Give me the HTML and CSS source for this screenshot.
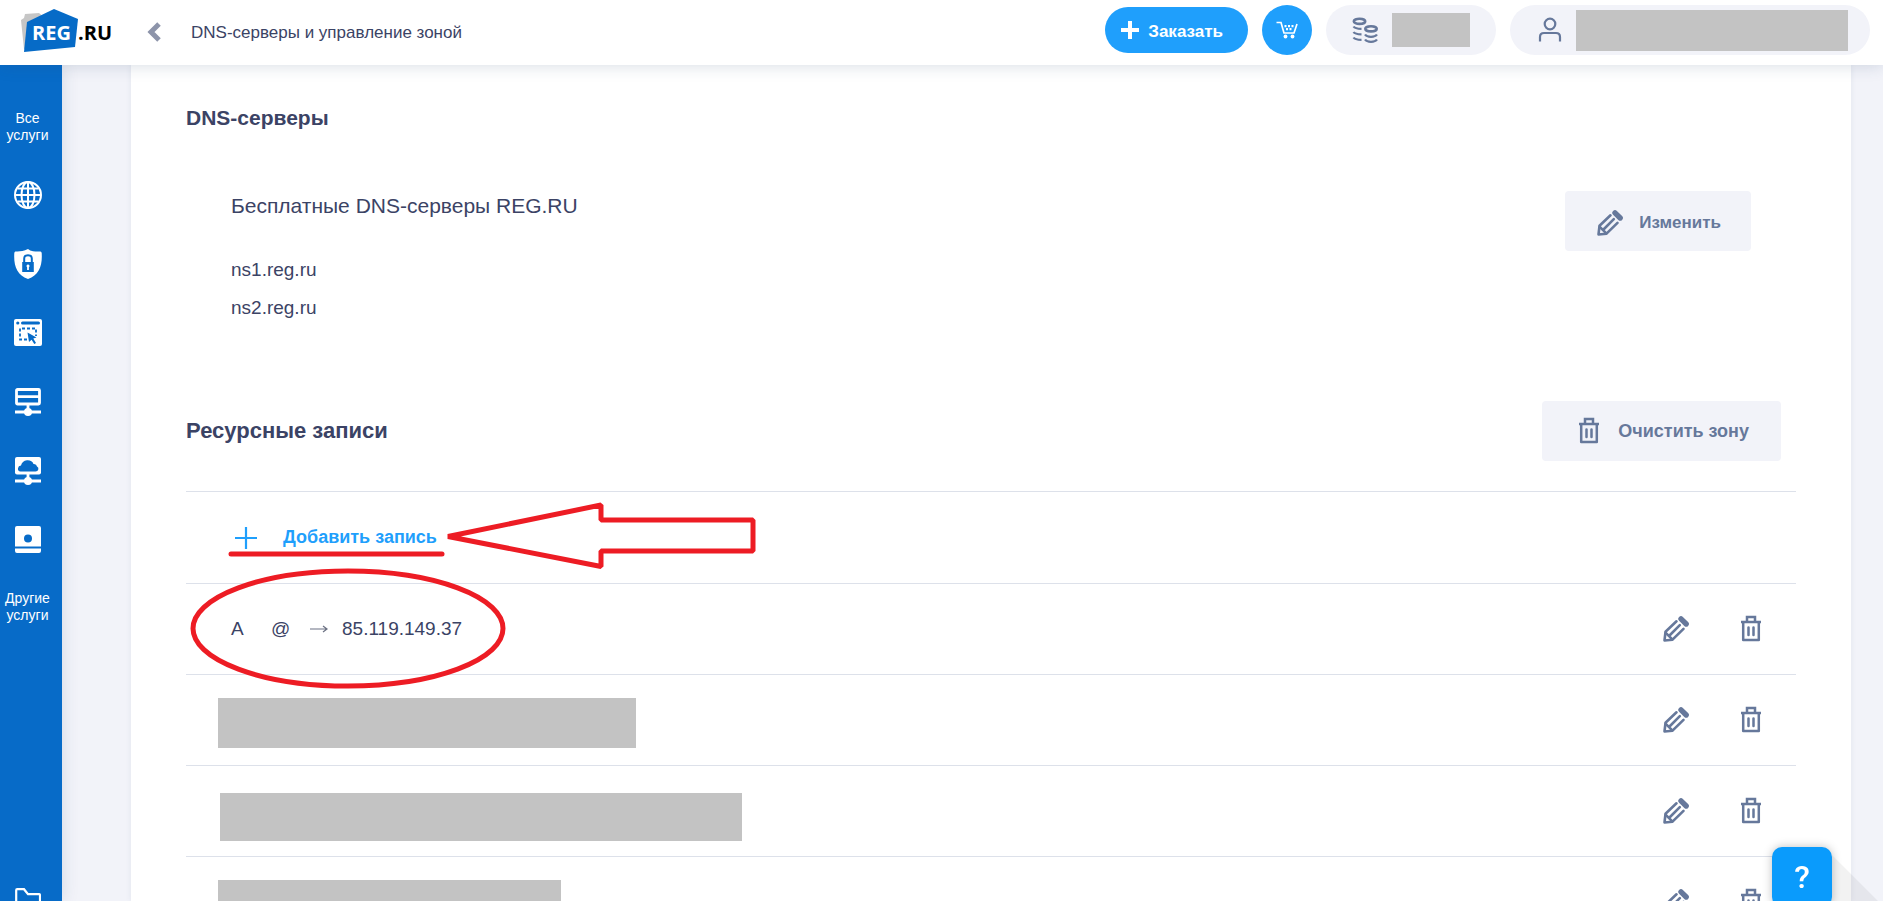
FILE: index.html
```html
<!DOCTYPE html>
<html lang="ru">

<head>
  <meta charset="UTF-8">
  <title>DNS-серверы и управление зоной</title>
  <meta name="viewport" content="width=device-width, initial-scale=1.0">
  <link rel="stylesheet" href="styles.css">
</head>

<body>
  <!-- shared icons -->
  <svg class="sprite" aria-hidden="true">
    <symbol id="i-pencil" viewBox="0 0 30 30">
      <g fill="none" stroke="currentColor" stroke-width="2.600" stroke-linecap="round" stroke-linejoin="round">
        <path d="M15.500 7.300 4.500 17.800 3.500 26.500 11.500 25.700 22.500 14.800"/>
        <path d="M18.800 11.200 8.500 21.500M4.800 18.800l6.500 6.500"/>
      </g>
      <path stroke="currentColor" stroke-width="5.400" stroke-linecap="round" d="M20 4.800 25.200 10"/>
    </symbol>
    <symbol id="i-trash" viewBox="0 0 30 30">
      <g fill="none" stroke="currentColor" stroke-width="2.500">
        <path d="M5 8h20M11 7.500V3h8v4.500" />
        <path stroke-linejoin="round" d="M7.200 8v18h15.600V8" />
        <path stroke-linecap="round" d="M12.500 13.500V21M17.500 13.500V21"/>
      </g>
    </symbol>
  </svg>

  <header class="header">
    <a class="logo" href="#" aria-label="REG.RU">
      <svg width="96" height="48" viewBox="0 0 96 48">
        <path fill="#c6c6c6" d="M0 14 3 12 4 8 18 7 24 12 14 41 3 43z"/>
        <path fill="#066bc7" d="M6 16 33 3 57 13 54 41 3 46z"/>
        <text class="logo-text" x="11" y="34" fill="#fff">REG</text>
        <text class="logo-text" x="57" y="34" fill="#000">.RU</text>
      </svg>
    </a>
    <a class="back" href="#" aria-label="Назад">
      <svg width="16" height="22" viewBox="0 0 16 22">
        <path d="M12 3 4 11 12 19" fill="none" stroke="#8d94aa" stroke-width="5"/>
      </svg>
    </a>
    <h1 class="header-title">DNS-серверы и управление зоной</h1>
    <div class="header-actions">
      <button class="order" type="button">
        <svg width="18" height="18" viewBox="0 0 18 18"><path d="M9 0v18M0 9h18" stroke="#fff" stroke-width="4"/></svg>
        <span>Заказать</span>
      </button>
      <button class="cart" type="button" aria-label="Корзина">
        <svg width="22" height="18" viewBox="0 0 22 18">
          <path d="M.5 1.500h4.500l3 10.500h10L21 3" fill="none" stroke="#fff" stroke-width="1.700"/>
          <path d="M8.500 5.200h10M10 8.200h7" stroke="#fff" stroke-width="2.200" stroke-dasharray="2 1.500"/>
          <circle cx="9.500" cy="15.500" r="1.900" fill="#fff"/><circle cx="16.500" cy="15.500" r="1.900" fill="#fff"/>
        </svg>
      </button>
      <a class="pill" href="#" aria-label="Баланс">
        <svg width="26" height="26" viewBox="0 0 26 26" fill="none" stroke="#66789b" stroke-width="2.600">
          <ellipse cx="7.500" cy="4.300" rx="5.700" ry="2.600"/>
          <ellipse cx="19" cy="11.800" rx="5.700" ry="2.600"/>
          <path stroke-width="2.200" d="M1.500 9.500q1.500 2.300 8 2.300M1.500 15q1.500 2.300 8 2.300M1.500 20.500q1.500 2.300 8 2.300M13 17.500q1.500 2.300 6 2.300t6-2.300M13 22.500q1.500 2.300 6 2.300t6-2.300"/>
        </svg>
        <span class="mask mask-balance"></span>
      </a>
      <a class="pill pill-user" href="#" aria-label="Профиль">
        <svg width="26" height="26" viewBox="0 0 26 26" fill="none" stroke="#66789b" stroke-width="2.200">
          <circle cx="14" cy="7" r="5.300"/>
          <path d="M4 24.500V20q0-4 4-4h12q4 0 4 4v4.500"/>
        </svg>
        <span class="mask mask-user"></span>
      </a>
    </div>
  </header>

  <div class="page">
    <nav class="sidebar">
      <a class="side-label" href="#">Все<br>услуги</a>
      <div class="side-icons">
        <a href="#" aria-label="Домены">
          <svg width="28" height="28" viewBox="0 0 28 28" fill="none" stroke="#fff" stroke-width="2">
            <circle cx="14" cy="14" r="13"/>
            <ellipse cx="14" cy="14" rx="6.500" ry="13"/>
            <path d="M14 1v26M1 14h26M3.500 7.500h21M3.500 20.500h21"/>
          </svg>
        </a>
        <a href="#" aria-label="SSL-сертификаты">
          <svg width="28" height="30" viewBox="0 0 28 30">
            <path fill="#fff" d="M14 0q2 1.800 5 2.200 4 .6 7.500.2 1 .3 1.200 1.600C28.500 17 25 26 14 30 3 26-.5 17 .3 4 .5 2.700 1.500 2.400 1.500 2.400 5 2.800 9 2.200 14 0z"/>
            <path fill="none" stroke="#076bc8" stroke-width="2" d="M10.200 14V9.500q0-3.300 3.800-3.300t3.800 3.300V14"/>
            <path fill="#076bc8" d="M8.200 13h11.600v10H8.200z"/>
            <path fill="#fff" d="M14 15.500a1.500 1.500 0 0 1 .9 2.700V21h-1.800v-2.800a1.500 1.500 0 0 1 .9-2.700z"/>
          </svg>
        </a>
        <a href="#" aria-label="Сайты">
          <svg width="28" height="27" viewBox="0 0 28 27">
            <rect width="28" height="27" rx="2" fill="#fff"/>
            <circle cx="3.800" cy="4" r="1.600" fill="#076bc8"/>
            <path stroke="#076bc8" stroke-width="3" stroke-linecap="round" d="M8.500 4h16"/>
            <path fill="none" stroke="#076bc8" stroke-width="1.800" stroke-dasharray="3 2" d="M13 20.500H6V9.500h16V17"/>
            <path fill="#076bc8" d="M13.500 13.500 22.500 18.500 19.300 19.500 22 24 20.300 25 17.600 20.700 15 23z"/>
          </svg>
        </a>
        <a href="#" aria-label="Хостинг">
          <svg width="26" height="28" viewBox="0 0 26 28" fill="none" stroke="#fff" stroke-width="2.800">
            <rect x="1.500" y="1.500" width="23" height="14.500" rx="1"/>
            <path d="M1.500 8.700h23M13 16v7M0 24h26"/>
            <circle cx="13" cy="24" r="4" fill="#fff" stroke="none"/>
          </svg>
        </a>
        <a href="#" aria-label="Облачные серверы">
          <svg width="26" height="28" viewBox="0 0 26 28">
            <rect width="26" height="17.500" rx="2" fill="#fff"/>
            <path fill="#076bc8" d="M5.500 14.500Q2.500 14 3 11.200q.3-2.300 3-2.700 1-4.500 6-5.200 5-.3 6.500 3.700 3-.3 3.500 2.500 2 1 1.300 3-.5 2-2.800 2z"/>
            <path d="M13 17v7M0 24h26" stroke="#fff" stroke-width="2.800"/>
            <circle cx="13" cy="24" r="4" fill="#fff"/>
          </svg>
        </a>
        <a href="#" aria-label="Выделенные серверы">
          <svg width="26" height="27" viewBox="0 0 26 27">
            <path fill="#fff" d="M2 0h22q2 0 2 2v18H0V2q0-2 2-2zM0 22.500h26V25q0 2-2 2H2q-2 0-2-2z"/>
            <path stroke="#fff" stroke-opacity=".5" d="M0 20.500h26"/>
            <circle cx="13" cy="12.500" r="4" fill="#076bc8"/>
          </svg>
        </a>
      </div>
      <a class="side-label" href="#">Другие<br>услуги</a>
      <a class="side-folder" href="#" aria-label="Документы">
        <svg width="26" height="24" viewBox="0 0 26 24">
          <path fill="none" stroke="#fff" stroke-width="2.200" d="M1.200 21V2.200q0-1 1-1H9l4 5h11q1 0 1 1V21q0 1-1 1H2.200q-1 0-1-1z"/>
        </svg>
      </a>
    </nav>

    <main class="content">
      <section class="servers">
        <h2 class="servers-title">DNS-серверы</h2>
        <div class="servers-body">
          <div>
            <h3 class="servers-name">Бесплатные DNS-серверы REG.RU</h3>
            <ul class="servers-list">
              <li>ns1.reg.ru</li>
              <li>ns2.reg.ru</li>
            </ul>
          </div>
          <button class="btn btn-edit" type="button">
            <svg class="icon"><use href="#i-pencil"/></svg>
            <span>Изменить</span>
          </button>
        </div>
      </section>

      <section class="records">
        <div class="records-head">
          <h2 class="records-title">Ресурсные записи</h2>
          <button class="btn btn-clear" type="button">
            <svg class="icon"><use href="#i-trash"/></svg>
            <span>Очистить зону</span>
          </button>
        </div>
        <div class="records-body">
          <div class="record-add">
            <button class="add" type="button">
              <svg class="icon" viewBox="0 0 30 30"><path d="M15 4v22M4 15h22" stroke="currentColor" stroke-width="2.200"/></svg>
              <span>Добавить запись</span>
            </button>
          </div>
          <ul class="records-list">
            <li class="record">
              <span class="record-type">A</span>
              <span class="record-host">@</span>
              <svg class="record-arrow" viewBox="0 0 18 10"><path d="M0 5h17M13 2 17 5 13 8" fill="none" stroke="#6b7183" stroke-width="1.200"/></svg>
              <span>85.119.149.37</span>
              <div class="record-actions">
                <button type="button" aria-label="Изменить запись"><svg class="icon"><use href="#i-pencil"/></svg></button>
                <button type="button" aria-label="Удалить запись"><svg class="icon"><use href="#i-trash"/></svg></button>
              </div>
            </li>
            <li class="record record-hidden">
              <span class="mask mask-first"></span>
              <div class="record-actions">
                <button type="button" aria-label="Изменить запись"><svg class="icon"><use href="#i-pencil"/></svg></button>
                <button type="button" aria-label="Удалить запись"><svg class="icon"><use href="#i-trash"/></svg></button>
              </div>
            </li>
            <li class="record record-hidden">
              <span class="mask mask-second"></span>
              <div class="record-actions">
                <button type="button" aria-label="Изменить запись"><svg class="icon"><use href="#i-pencil"/></svg></button>
                <button type="button" aria-label="Удалить запись"><svg class="icon"><use href="#i-trash"/></svg></button>
              </div>
            </li>
            <li class="record record-hidden">
              <span class="mask mask-third"></span>
              <div class="record-actions">
                <button type="button" aria-label="Изменить запись"><svg class="icon"><use href="#i-pencil"/></svg></button>
                <button type="button" aria-label="Удалить запись"><svg class="icon"><use href="#i-trash"/></svg></button>
              </div>
            </li>
          </ul>
          <!-- red marks over the list: underline, arrow, ellipse -->
          <svg class="marks" width="580" height="200" viewBox="0 0 580 200" fill="none" stroke="#ed1c24" stroke-width="5">
            <path stroke-linecap="round" d="M45 63h211"/>
            <path d="M262 45.500 415 14V29h152v31H415V75.500z" stroke-linejoin="bevel"/>
            <ellipse cx="162" cy="137.500" rx="155" ry="57.500"/>
          </svg>
        </div>
      </section>
    </main>
  </div>

  <div class="help">
    <svg class="help-shadow" width="60" height="60" viewBox="0 0 60 60"><path d="M0 8 52 60H0z" fill="#000" fill-opacity=".05"/></svg>
    <button class="help-btn" type="button">?</button>
  </div>
</body>

</html>
```
FILE: styles.css
```css
* {
  box-sizing: border-box;
  margin: 0;
  padding: 0;
}

body {
  display: flex;
  flex-direction: column;
  height: 100vh;
  overflow: hidden;
  background: #f2f3f9;
  color: #3b4365;
  font-family: "Liberation Sans", Arial, sans-serif;
  font-size: 18px;
}

a {
  color: inherit;
  text-decoration: none;
}

ul {
  list-style: none;
}

button {
  border: 0;
  background: none;
  color: inherit;
  font: inherit;
  cursor: pointer;
}

svg {
  display: block;
  flex: none;
}

.sprite {
  position: absolute;
  width: 0;
  height: 0;
}

.icon {
  width: 30px;
  height: 30px;
}

.mask {
  flex: none;
  background: #c3c3c3;
}

/* header */
.header {
  position: relative;
  z-index: 2;
  display: flex;
  flex: none;
  align-items: center;
  height: 65px;
  padding: 0 13px 5px 21px;
  background: #fff;
  box-shadow: 0 0 16px rgba(40, 70, 110, .2);
}

.logo-text {
  font-family: "Open Sans", sans-serif;
  font-size: 20px;
  font-weight: 700;
}

.back {
  margin: 4px 28px 0 30px;
}

.header-title {
  margin-top: 6px;
  font-size: 17px;
  font-weight: 400;
}

.header-actions {
  display: flex;
  align-items: center;
  gap: 14px;
  margin-left: auto;
}

.order {
  display: flex;
  align-items: center;
  gap: 9px;
  height: 46px;
  padding: 0 25px 0 16px;
  border-radius: 23px;
  background: #1f9ffc;
  color: #fff;
  font-size: 17px;
  font-weight: 700;
}

.order span {
  padding-top: 4px;
}

.cart {
  display: flex;
  align-items: center;
  justify-content: center;
  width: 50px;
  height: 50px;
  border-radius: 50%;
  background: #1f9ffc;
}

.pill {
  display: flex;
  align-items: center;
  gap: 14px;
  height: 50px;
  padding: 0 26px;
  border-radius: 25px;
  background: #f2f3f9;
}

.pill-user {
  padding-right: 22px;
}

.mask-balance {
  width: 78px;
  height: 34px;
}

.mask-user {
  width: 272px;
  height: 41px;
}

/* sidebar */
.page {
  display: flex;
  flex: 1;
  min-height: 0;
}

.sidebar {
  display: flex;
  flex: none;
  flex-direction: column;
  align-items: center;
  width: 62px;
  padding: 45px 7px 0 0;
  background: #076bc8;
  box-shadow: 0 0 16px rgba(40, 70, 110, .15);
  color: #fff;
}

.side-label {
  font-size: 14px;
  line-height: 17px;
  text-align: center;
}

.side-icons {
  margin: 16px 0;
}

.side-icons a {
  display: flex;
  align-items: center;
  justify-content: center;
  height: 69px;
}

.side-folder {
  margin-top: auto;
  margin-bottom: -11px;
}

/* content */
.content {
  flex: 1;
  margin: 0 32px 0 69px;
  padding: 41px 55px 0;
  overflow: hidden;
  background: #fff;
  box-shadow: 0 0 6px rgba(40, 70, 110, .08);
}

.servers-title {
  font-size: 21px;
  line-height: 24px;
}

.servers-body {
  display: flex;
  align-items: flex-start;
  justify-content: space-between;
  margin-top: 61px;
  padding: 0 45px;
}

.servers-name {
  font-size: 21px;
  font-weight: 400;
  line-height: 30px;
}

.servers-list {
  margin-top: 30px;
  font-size: 19px;
  line-height: 38px;
}

.btn {
  display: flex;
  align-items: center;
  gap: 14px;
  height: 60px;
  padding: 0 30px;
  border-radius: 4px;
  background: #f2f3f9;
  color: #66789b;
  font-weight: 700;
}

.btn-edit {
  padding-top: 4px;
  font-size: 17px;
}

.btn-clear {
  padding: 0 32px;
}

.records {
  margin-top: 74px;
}

.records-head {
  display: flex;
  align-items: center;
  justify-content: space-between;
  padding-right: 15px;
}

.records-title {
  font-size: 22px;
}

.records-body {
  position: relative;
  margin-top: 30px;
}

.record-add {
  display: flex;
  align-items: center;
  height: 92px;
  padding: 0 45px;
  border-top: 1px solid #dde1ea;
}

.add {
  display: flex;
  align-items: center;
  gap: 22px;
  color: #1f9ffc;
  font-weight: 700;
}

.record {
  display: flex;
  align-items: center;
  height: 91px;
  padding: 0 30px 0 45px;
  border-top: 1px solid #dde1ea;
  font-size: 19px;
}

.record-type {
  width: 40px;
}

.record-host {
  width: 39px;
}

.record-arrow {
  width: 18px;
  height: 10px;
  margin-right: 14px;
}

.record-actions {
  display: flex;
  gap: 45px;
  margin-left: auto;
  color: #66789b;
}

.record-hidden {
  padding-left: 32px;
}

.record-hidden .mask {
  align-self: flex-start;
  height: 50px;
  margin-top: 23px;
}

.mask-first {
  width: 418px;
}

.record-hidden .mask-second {
  width: 522px;
  height: 48px;
  margin-top: 27px;
  margin-left: 2px;
}

.mask-third {
  width: 343px;
}

.marks {
  position: absolute;
  top: 0;
  left: 0;
  pointer-events: none;
}

/* help button */
.help {
  position: fixed;
  right: 51px;
  bottom: -6px;
  z-index: 3;
}

.help-btn {
  position: relative;
  width: 60px;
  height: 60px;
  border-radius: 10px;
  background: #0a9bfc;
  box-shadow: 0 0 10px rgba(0, 0, 0, .25);
  color: #fff;
  font-family: Roboto, sans-serif;
  font-size: 32px;
  font-weight: 500;
}

.help-shadow {
  position: absolute;
  top: 0;
  left: 60px;
}
```
